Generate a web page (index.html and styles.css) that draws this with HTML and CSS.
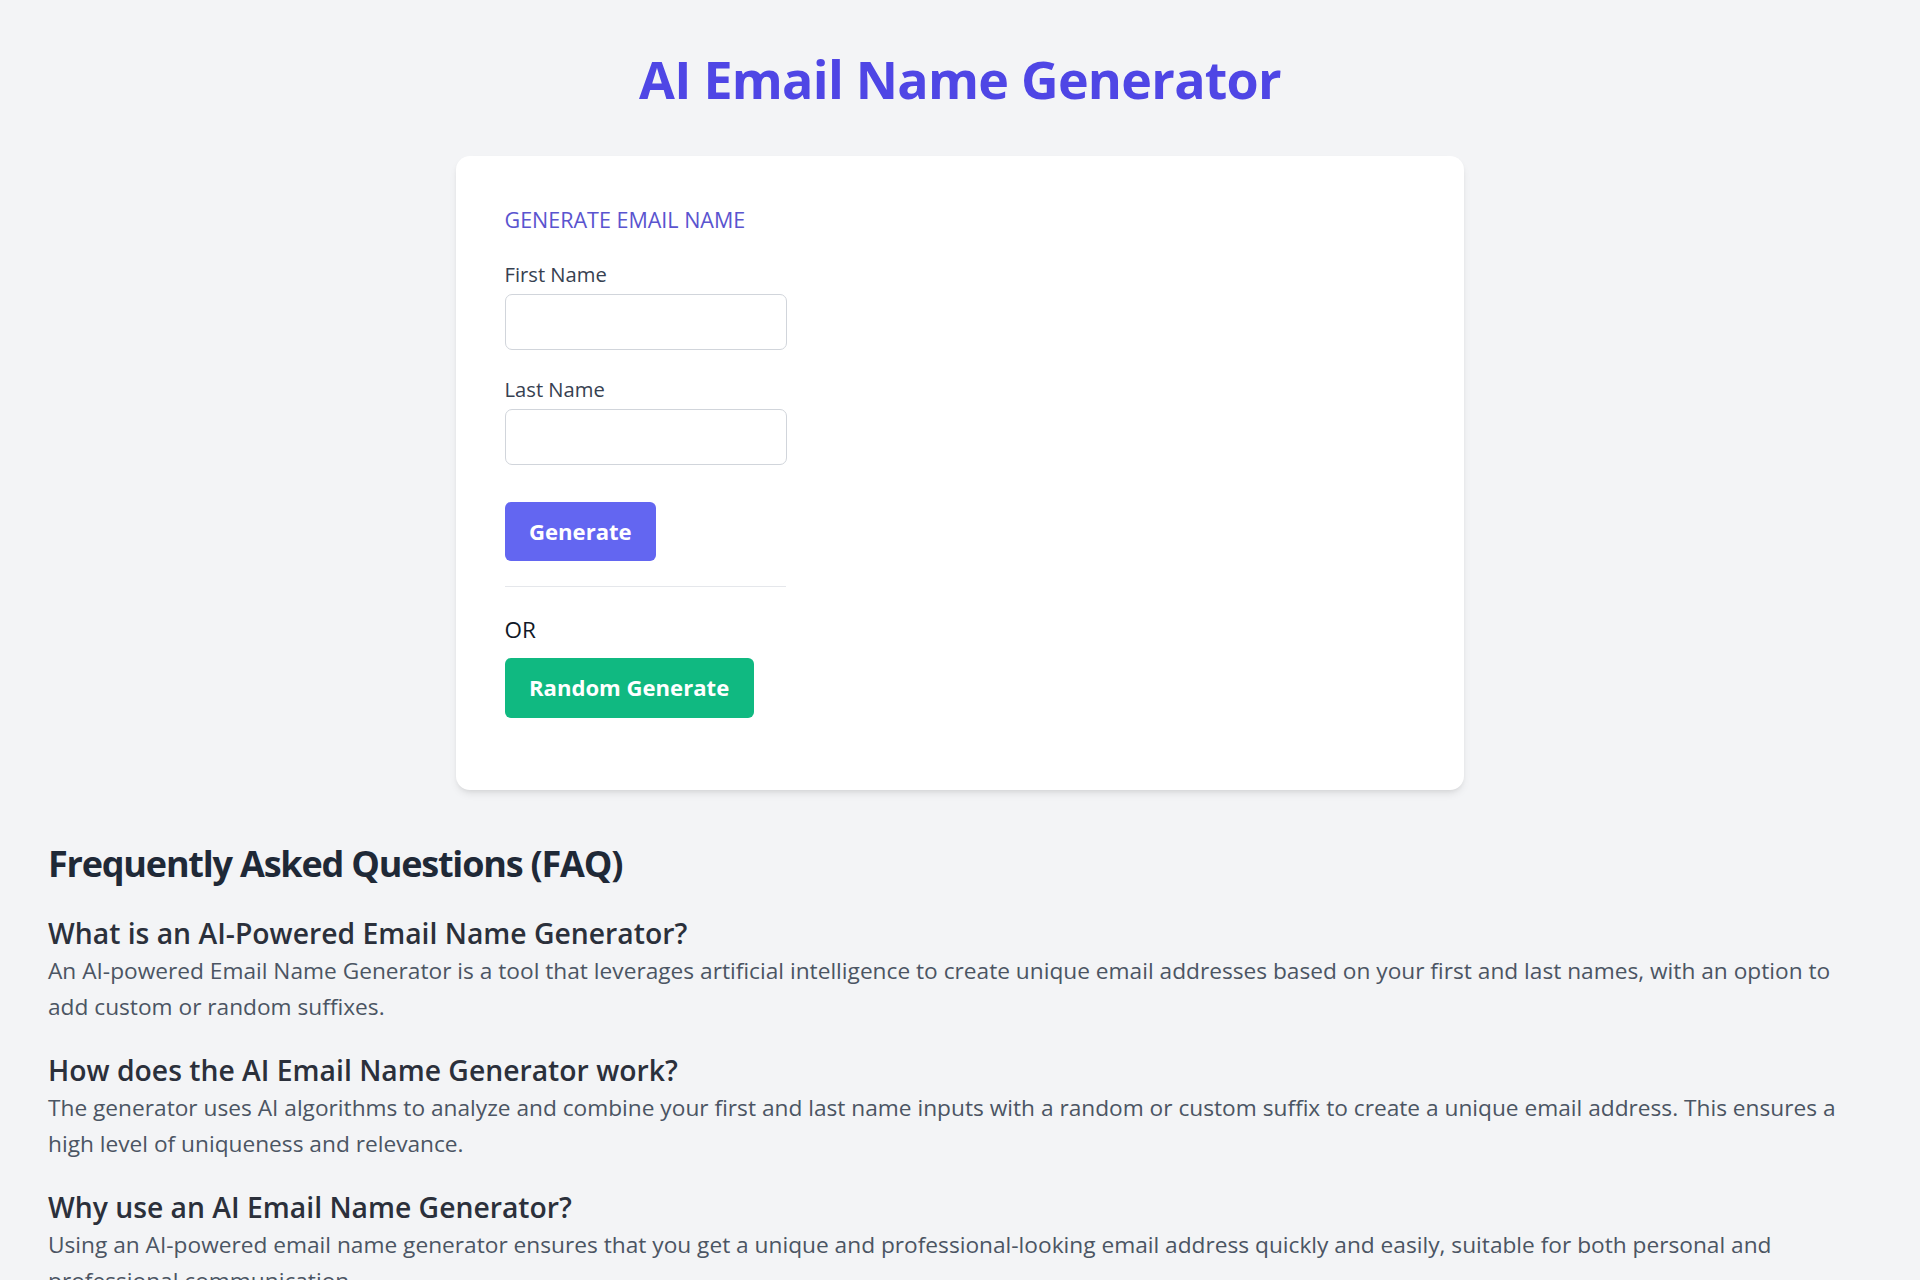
FILE: index.html
```html
<!DOCTYPE html>
<html lang="en">
<head>
<meta charset="utf-8">
<title>AI Email Name Generator</title>
<link rel="stylesheet" href="styles.css">
</head>
<body>
<main class="page">
  <h1 class="title">AI Email Name Generator</h1>
  <section class="card">
    <h2 class="card-label">Generate Email Name</h2>
    <div class="field">
      <label class="field-label" for="first">First Name</label>
      <input class="field-input" id="first" type="text">
    </div>
    <div class="field">
      <label class="field-label" for="last">Last Name</label>
      <input class="field-input" id="last" type="text">
    </div>
    <button class="btn btn-primary" type="button">Generate</button>
    <hr class="divider">
    <p class="or">OR</p>
    <button class="btn btn-green" type="button">Random Generate</button>
  </section>
  <section class="faq">
    <h2 class="faq-title">Frequently Asked Questions (FAQ)</h2>
    <div class="faq-item">
      <h3 class="faq-q">What is an AI-Powered Email Name Generator?</h3>
      <p class="faq-a">An AI-powered Email Name Generator is a tool that leverages artificial intelligence to create unique email addresses based on your first and last names, with an option to add custom or random suffixes.</p>
    </div>
    <div class="faq-item">
      <h3 class="faq-q">How does the AI Email Name Generator work?</h3>
      <p class="faq-a">The generator uses AI algorithms to analyze and combine your first and last name inputs with a random or custom suffix to create a unique email address. This ensures a high level of uniqueness and relevance.</p>
    </div>
    <div class="faq-item">
      <h3 class="faq-q">Why use an AI Email Name Generator?</h3>
      <p class="faq-a">Using an AI-powered email name generator ensures that you get a unique and professional-looking email address quickly and easily, suitable for both personal and professional communication.</p>
    </div>
  </section>
</main>
</body>
</html>
```
FILE: styles.css
```css
* { box-sizing: border-box; }
html, body { margin: 0; padding: 0; }
body {
  background: #f3f4f6;
  font-family: "Open Sans", "Noto Sans", sans-serif;
  color: #1f2937;
}
.page {
  display: flex;
  flex-direction: column;
  align-items: center;
  padding: 47px 48px 40px;
}
.title {
  margin: 0;
  font-size: 52px;
  line-height: 64px;
  font-weight: 700;
  letter-spacing: -0.75px;
  color: #4f46e5;
  text-align: center;
}
.card {
  margin-top: 44.5px;
  width: 1008px;
  background: #ffffff;
  border-radius: 14px;
  box-shadow: 0 5px 8px -2px rgba(0,0,0,0.10), 0 2px 5px -2px rgba(0,0,0,0.08);
  padding: 49px 49px 72px 48.5px;
  display: flex;
  flex-direction: column;
  align-items: flex-start;
}
.card-label {
  margin: 0;
  font-size: 21.5px;
  line-height: 30px;
  font-weight: 400;
  text-transform: uppercase;
  color: #5a54cf;
}
.field {
  display: flex;
  flex-direction: column;
  gap: 6px;
  margin-top: 25.5px;
}
.field-label {
  font-size: 20.2px;
  line-height: 28px;
  color: #374151;
}
.field-input {
  width: 282px;
  height: 55.5px;
  border: 1px solid #d1d5db;
  border-radius: 7px;
  background: #fff;
  font: inherit;
}
.btn {
  border: none;
  border-radius: 6px;
  padding: 12px 24.5px;
  font-family: "Open Sans", "Noto Sans", sans-serif;
  font-size: 22.1px;
  line-height: 35.4px;
  font-weight: 700;
  color: #ffffff;
}
.btn-primary {
  margin-top: 37px;
  background: #6366f1;
}
.btn-green {
  margin-top: 12.4px;
  background: #10b981;
}
.divider {
  width: 281px;
  margin: 25px 0 0;
  border: none;
  border-top: 1px solid #e5e7eb;
}
.or {
  margin: 27px 0 0;
  font-size: 22.5px;
  line-height: 32px;
  color: #111827;
}
.faq {
  align-self: stretch;
  margin-top: 50px;
  padding-right: 24px;
}
.faq-title {
  margin: 0;
  font-size: 36px;
  line-height: 48px;
  font-weight: 700;
  letter-spacing: -1.2px;
  color: #1f2937;
}
.faq-item { margin-top: 27px; }
.faq-q {
  margin: 0;
  font-size: 28.3px;
  line-height: 36px;
  font-weight: 600;
  color: #2b303b;
}
.faq-a {
  margin: 2px 0 0;
  font-size: 22.7px;
  line-height: 36px;
  color: #4b5563;
}
```
